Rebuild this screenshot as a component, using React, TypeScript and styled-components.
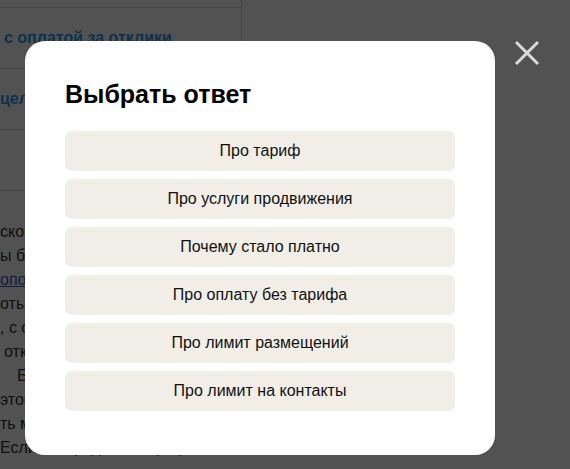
import React from "react";
import styled, { createGlobalStyle } from "styled-components";

const GlobalStyle = createGlobalStyle`
  html, body {
    margin: 0;
    padding: 0;
    background: #fff;
  }
  body {
    font-family: "Liberation Sans", Arial, sans-serif;
  }
`;

const Page = styled.div`
  position: relative;
  width: 570px;
  height: 469px;
  overflow: hidden;
  display: grid;
  grid-template-columns: 241px 1fr;
`;

const LeftColumn = styled.div`
  display: flex;
  flex-direction: column;
  overflow: hidden;
`;

const RightColumn = styled.div`
  border-left: 1px solid #d2d2d2;
  height: 200px;
`;

const TableRow = styled.div<{ $h: number }>`
  height: ${(p) => p.$h}px;
  border-bottom: 1px solid #d2d2d2;
  display: flex;
  align-items: center;
  white-space: nowrap;
`;

const RowLink = styled.a<{ $indent: number }>`
  padding-left: ${(p) => p.$indent}px;
  color: #2b9af0;
  font-weight: 700;
  font-size: 16px;
  text-decoration: none;
`;

const Body = styled.div`
  padding-top: 29px;
  font-size: 16px;
  line-height: 24px;
  color: #333;
`;

const Line = styled.div<{ $indent?: number }>`
  white-space: nowrap;
  padding-left: ${(p) => p.$indent ?? 0}px;
`;

const InlineLink = styled.a`
  color: #2f5fc8;
  text-decoration: underline;
`;

const Overlay = styled.div`
  position: fixed;
  inset: 0;
  background: rgba(0, 0, 0, 0.68);
  display: flex;
  align-items: flex-start;
  padding: 41px 0 0 25px;
  box-sizing: border-box;
`;

const Modal = styled.div`
  width: 470px;
  box-sizing: border-box;
  background: #fff;
  border-radius: 20px;
  padding: 39px 40px 44px;
`;

const Title = styled.h2`
  margin: 0 0 23px;
  font-size: 25px;
  line-height: 28px;
  font-weight: 700;
  color: #000;
`;

const Options = styled.div`
  display: flex;
  flex-direction: column;
  gap: 8px;
`;

const OptionButton = styled.button`
  height: 40px;
  border: none;
  border-radius: 6px;
  background: #f1eee8;
  font-family: "Liberation Sans", Arial, sans-serif;
  font-size: 16px;
  color: #111;
  cursor: pointer;
  padding: 0 16px;
`;

const CloseButton = styled.button`
  position: absolute;
  top: 40px;
  left: 514px;
  width: 26px;
  height: 26px;
  padding: 0;
  border: none;
  background: transparent;
  cursor: pointer;
  display: flex;
  align-items: center;
  justify-content: center;
`;

const options = [
  "Про тариф",
  "Про услуги продвижения",
  "Почему стало платно",
  "Про оплату без тарифа",
  "Про лимит размещений",
  "Про лимит на контакты",
];

export default function App() {
  return (
    <>
      <GlobalStyle />
      <Page>
        <LeftColumn>
          <TableRow $h={7} />
          <TableRow $h={60}>
            <RowLink $indent={4} href="#">с оплатой за отклики</RowLink>
          </TableRow>
          <TableRow $h={60}>
            <RowLink $indent={0} href="#">целевые</RowLink>
          </TableRow>
          <TableRow $h={60} />
          <Body>
            <Line>ской территории России</Line>
            <Line>ы будут доступны</Line>
            <Line>
              <InlineLink href="#">ополнительные</InlineLink> услуги
            </Line>
            <Line>оты и размещения</Line>
            <Line>, с оплатой за отклики</Line>
            <Line $indent={4}>отклики</Line>
            <Line $indent={17}>Бесплатно</Line>
            <Line>этом случае</Line>
            <Line>ть можно</Line>
            <Line>Если вы продлите тариф</Line>
          </Body>
        </LeftColumn>
        <RightColumn />
      </Page>
      <Overlay>
        <Modal>
          <Title>Выбрать ответ</Title>
          <Options>
            {options.map((o) => (
              <OptionButton key={o}>{o}</OptionButton>
            ))}
          </Options>
        </Modal>
        <CloseButton aria-label="Закрыть">
          <svg width="26" height="26" viewBox="0 0 26 26">
            <path d="M2 2 L24 24 M24 2 L2 24" stroke="#d9d9d9" strokeWidth="3" fill="none" />
          </svg>
        </CloseButton>
      </Overlay>
    </>
  );
}
